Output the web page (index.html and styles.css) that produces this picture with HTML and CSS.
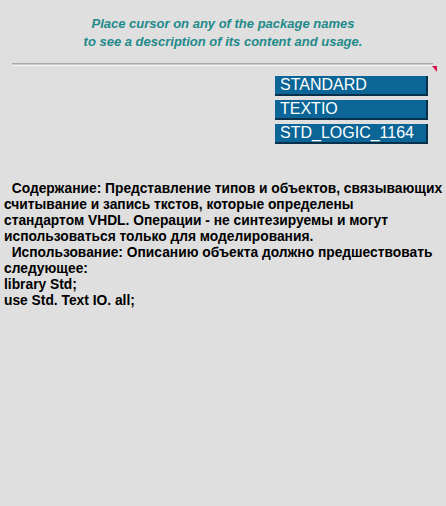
FILE: index.html
```html
<!DOCTYPE html>
<html>
<head>
<meta charset="utf-8">
<link rel="stylesheet" href="styles.css">
</head>
<body>
<div class="page">
  <p class="intro">Place cursor on any of the package names<br>to see a description of its content and usage.</p>
  <div class="rule"></div>
  <span class="marker"></span>
  <div class="packages">
    <div class="pkg">STANDARD</div>
    <div class="pkg">TEXTIO</div>
    <div class="pkg">STD_LOGIC_1164</div>
  </div>
  <div class="desc">
    <div>&nbsp;&nbsp;Содержание: Представление типов и объектов, связывающих<br>считывание и запись ткстов, которые определены<br>стандартом VHDL. Операции - не синтезируемы и могут<br>использоваться только для моделирования.</div>
    <div>&nbsp;&nbsp;Использование: Описанию объекта должно предшествовать<br>следующее:</div>
    <div>library Std;</div>
    <div>use Std. Text IO. all;</div>
  </div>
</div>
</body>
</html>
```
FILE: styles.css
```css
html, body {
  margin: 0;
  padding: 0;
  background: #dfdfdf;
}
.page {
  position: relative;
  width: 446px;
  height: 506px;
  overflow: hidden;
  font-family: "Liberation Sans", Arial, sans-serif;
}
.intro {
  margin: 0;
  padding-top: 15px;
  text-align: center;
  color: #1f8a8a;
  font-weight: bold;
  font-style: italic;
  font-size: 13px;
  line-height: 18px;
}
.rule {
  margin: 12px 13px 0 12px;
  height: 1px;
  border-top: 1px solid #a8a8a8;
  border-bottom: 1px solid #f6f6f6;
  background: #c8c8c8;
}
.marker {
  position: absolute;
  left: 432px;
  top: 66px;
  width: 0;
  height: 0;
  border-left: 5px solid transparent;
  border-top: 6px solid #d8164e;
}
.packages {
  display: flex;
  flex-direction: column;
  align-items: flex-end;
  gap: 4px;
  margin-top: 10px;
  padding-right: 18px;
}
.pkg {
  box-sizing: border-box;
  width: 153px;
  height: 20px;
  background: #0b6596;
  border-right: 2px solid #08304a;
  border-bottom: 2px solid #08304a;
  color: #ffffff;
  font-size: 16px;
  line-height: 18px;
  padding-left: 5px;
}
.desc {
  margin-top: 37px;
  padding: 0 0 0 4px;
  font-size: 13.8px;
  font-weight: bold;
  line-height: 16px;
  color: #000;
  white-space: nowrap;
}
```
